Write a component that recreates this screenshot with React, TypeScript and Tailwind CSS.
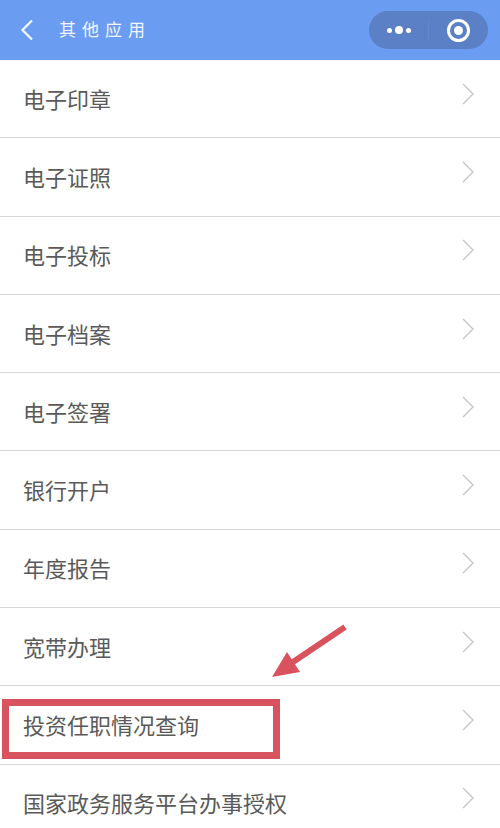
const items = [
  "电子印章",
  "电子证照",
  "电子投标",
  "电子档案",
  "电子签署",
  "银行开户",
  "年度报告",
  "宽带办理",
  "投资任职情况查询",
  "国家政务服务平台办事授权",
];

function Chevron() {
  return (
    <svg width="12" height="22" viewBox="0 0 12 22" fill="none" className="mt-[-10px] shrink-0">
      <path d="M1 1l10 10L1 21" stroke="#c4c4c4" strokeWidth="1.3" />
    </svg>
  );
}

export default function App() {
  return (
    <div
      className="relative w-[500px] h-[828px] overflow-hidden bg-white"
      style={{ fontFamily: '"Noto Sans CJK SC", "Noto Sans", sans-serif' }}
    >
      {/* Header */}
      <header className="h-[60px] bg-[#6a9cf2] flex items-center pl-[20px] pr-[12px]">
        <svg width="14" height="22" viewBox="0 0 14 22" fill="none" className="shrink-0">
          <path d="M12 1.5L2.5 11l9.5 9.5" stroke="#f4f8ff" strokeWidth="2.2" />
        </svg>
        <span className="ml-[25px] mt-[-2px] text-[17px] tracking-[6px] text-[#f2f6ff]">其他应用</span>

        <div className="ml-auto w-[119px] h-[38px] rounded-full bg-[#5b80c6] flex items-center">
          <div className="w-[59px] flex items-center justify-center gap-[3px] pl-[1px]">
            <span className="w-[5px] h-[5px] rounded-full bg-white" />
            <span className="w-[8px] h-[8px] rounded-full bg-white" />
            <span className="w-[5px] h-[5px] rounded-full bg-white" />
          </div>
          <div className="w-px h-[20px] bg-[#6488cc]" />
          <div className="flex-1 flex items-center justify-center">
            <div className="w-[23px] h-[23px] rounded-full border-[3px] border-white flex items-center justify-center">
              <div className="w-[9px] h-[9px] rounded-full bg-white" />
            </div>
          </div>
        </div>
      </header>

      {/* List */}
      <ul>
        {items.map((item) => (
          <li
            key={item}
            className="h-[78.3px] border-b border-[#d6d6d6] flex items-center justify-between pl-[23px] pr-[26px] text-[22px] text-[#5a5a5a]"
          >
            <span className="mt-[-1px]">{item}</span>
            <Chevron />
          </li>
        ))}
      </ul>

      {/* Annotations */}
      <div className="absolute left-[2px] top-[699px] w-[278px] h-[60px] border-[7px] border-[#d9535f]" />
      <svg width="90" height="66" viewBox="0 0 90 66" fill="none" className="absolute left-[265px] top-[620px]">
        <path d="M80 7L28 42" stroke="#d9535f" strokeWidth="6" />
        <path d="M7 57L22 32L35 52Z" fill="#d9535f" />
      </svg>
    </div>
  );
}
